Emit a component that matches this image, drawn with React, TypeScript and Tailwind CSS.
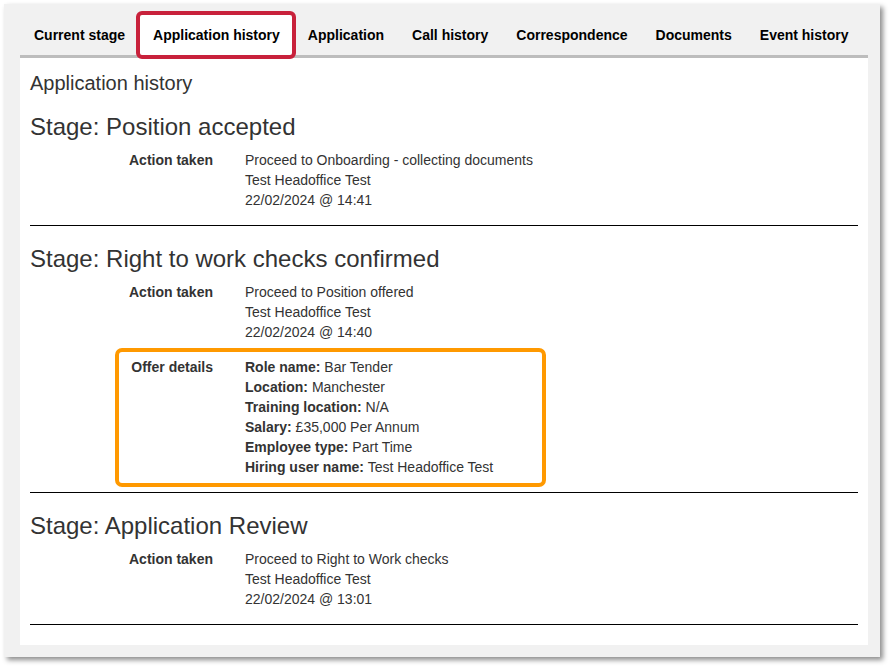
const tabs = [
  'Current stage',
  'Application history',
  'Application',
  'Call history',
  'Correspondence',
  'Documents',
  'Event history',
];

type Row = { label: string; lines: React.ReactNode[]; highlight?: boolean };
type Stage = { title: string; rows: Row[] };

const stages: Stage[] = [
  {
    title: 'Stage: Position accepted',
    rows: [
      {
        label: 'Action taken',
        lines: ['Proceed to Onboarding - collecting documents', 'Test Headoffice Test', '22/02/2024 @ 14:41'],
      },
    ],
  },
  {
    title: 'Stage: Right to work checks confirmed',
    rows: [
      {
        label: 'Action taken',
        lines: ['Proceed to Position offered', 'Test Headoffice Test', '22/02/2024 @ 14:40'],
      },
      {
        label: 'Offer details',
        highlight: true,
        lines: [
          <><b>Role name:</b> Bar Tender</>,
          <><b>Location:</b> Manchester</>,
          <><b>Training location:</b> N/A</>,
          <><b>Salary:</b> £35,000 Per Annum</>,
          <><b>Employee type:</b> Part Time</>,
          <><b>Hiring user name:</b> Test Headoffice Test</>,
        ],
      },
    ],
  },
  {
    title: 'Stage: Application Review',
    rows: [
      {
        label: 'Action taken',
        lines: ['Proceed to Right to Work checks', 'Test Headoffice Test', '22/02/2024 @ 13:01'],
      },
    ],
  },
];

function DetailRow({ row }: { row: Row }) {
  return (
    <div className="relative grid grid-cols-[183px_1fr] gap-x-[32px] mb-[15px] text-[14px] leading-[20px]">
      {/* Annotation highlight */}
      {row.highlight && (
        <div className="absolute -top-[9px] -bottom-[10px] left-[85px] w-[431px] border-[4px] border-[#ff9900] rounded-[7px]" />
      )}
      <div className="text-right font-bold text-[#333]">{row.label}</div>
      <div className="text-[#333]">
        {row.lines.map((line, i) => (
          <div key={i}>{line}</div>
        ))}
      </div>
    </div>
  );
}

export default function App() {
  return (
    <div className="min-h-[666px] bg-white pt-[4px] pl-[4px]" style={{ fontFamily: '"Liberation Sans", Arial, sans-serif' }}>
      <div className="w-[876px] h-[653px] bg-[#f1f1f1] shadow-[3px_3px_5px_rgba(0,0,0,0.45)] pl-[16px] pr-[12px] pt-[10px] flex flex-col">
        {/* Tabs */}
        <div className="flex border-b-[3px] border-[#bdbdbd]">
          {tabs.map((tab) => {
            const active = tab === 'Application history';
            return (
              <div
                key={tab}
                className={`relative px-[14px] pt-[11px] pb-[10px] text-[14px] leading-[20px] font-bold text-black ${active ? 'bg-white' : ''}`}
              >
                {tab}
                {active && (
                  <div className="absolute -top-[3px] -bottom-[4px] -left-[3px] -right-[2px] border-[4px] border-[#c8213b] rounded-[6px]" />
                )}
              </div>
            );
          })}
        </div>

        {/* Panel */}
        <div className="bg-white px-[10px] pt-[14px] pb-[20px]">
          <h1 className="text-[20px] leading-[22px] text-[#333]">Application history</h1>
          {stages.map((stage) => (
            <div key={stage.title}>
              <h2 className="mt-[20px] mb-[10px] text-[24px] leading-[26px] text-[#333]">{stage.title}</h2>
              {stage.rows.map((row) => (
                <DetailRow key={row.label} row={row} />
              ))}
              <hr className="border-0 border-t border-black" />
            </div>
          ))}
        </div>
      </div>
    </div>
  );
}
